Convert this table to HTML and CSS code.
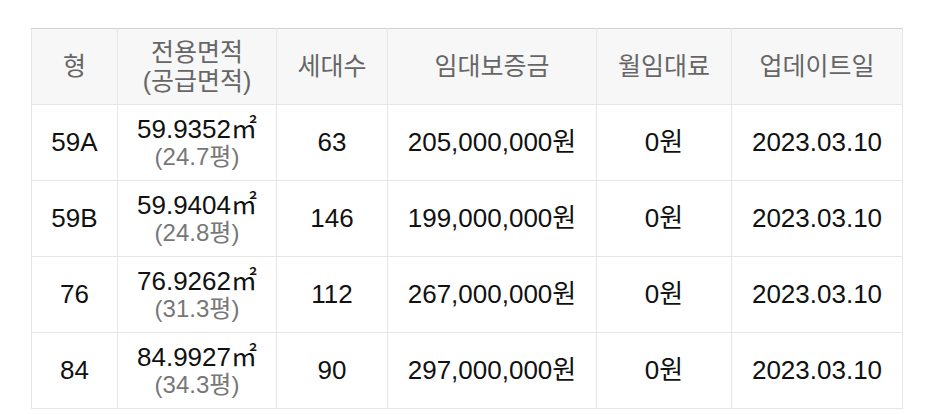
FILE: index.html
```html
<!DOCTYPE html>
<html lang="ko">
<head>
<meta charset="utf-8">
<link rel="stylesheet" href="styles.css">
</head>
<body>
<div class="wrap">
<table class="rent">
  <colgroup>
    <col class="c1"><col class="c2"><col class="c3"><col class="c4"><col class="c5"><col class="c6">
  </colgroup>
  <thead>
    <tr>
      <th>형</th>
      <th>전용면적<br>(공급면적)</th>
      <th>세대수</th>
      <th>임대보증금</th>
      <th>월임대료</th>
      <th>업데이트일</th>
    </tr>
  </thead>
  <tbody>
    <tr>
      <td>59A</td>
      <td><span class="area">59.9352㎡</span><span class="sub">(24.7평)</span></td>
      <td>63</td>
      <td>205,000,000원</td>
      <td>0원</td>
      <td>2023.03.10</td>
    </tr>
    <tr>
      <td>59B</td>
      <td><span class="area">59.9404㎡</span><span class="sub">(24.8평)</span></td>
      <td>146</td>
      <td>199,000,000원</td>
      <td>0원</td>
      <td>2023.03.10</td>
    </tr>
    <tr>
      <td>76</td>
      <td><span class="area">76.9262㎡</span><span class="sub">(31.3평)</span></td>
      <td>112</td>
      <td>267,000,000원</td>
      <td>0원</td>
      <td>2023.03.10</td>
    </tr>
    <tr>
      <td>84</td>
      <td><span class="area">84.9927㎡</span><span class="sub">(34.3평)</span></td>
      <td>90</td>
      <td>297,000,000원</td>
      <td>0원</td>
      <td>2023.03.10</td>
    </tr>
  </tbody>
</table>
</div>
</body>
</html>
```

FILE: styles.css
```css
html, body {
  margin: 0;
  padding: 0;
  background: #ffffff;
}
body {
  font-family: "Liberation Sans", Arial, "Noto Sans CJK KR", sans-serif;
  color: #111111;
}
.wrap {
  padding: 28px 0 0 31px;
}
.rent {
  border-collapse: collapse;
  table-layout: fixed;
  width: 871px;
}
.c1 { width: 86px; }
.c2 { width: 159px; }
.c3 { width: 111px; }
.c4 { width: 209px; }
.c5 { width: 135px; }
.c6 { width: 171px; }
.rent th,
.rent td {
  border: 1px solid #e6e6e6;
  text-align: center;
  vertical-align: middle;
  padding: 0;
  height: 75px;
}
.rent th {
  background: #f7f7f7;
  color: #666666;
  font-weight: normal;
  font-size: 25px;
  line-height: 29px;
  border-top: 1px solid #cfcfcf;
}
.rent td {
  font-size: 26px;
  line-height: 29px;
}
.area {
  display: block;
  line-height: 28px;
}
.sub {
  display: block;
  color: #777777;
  font-size: 24px;
  line-height: 28px;
}
```
